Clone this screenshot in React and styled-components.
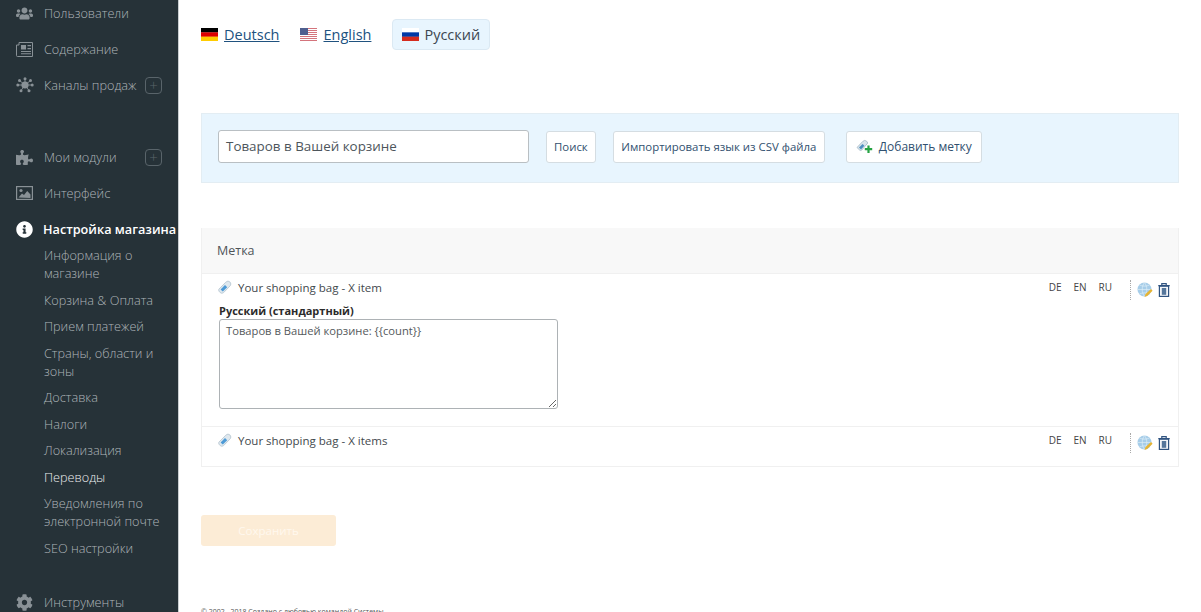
import React from "react";
import styled, { createGlobalStyle } from "styled-components";
import { FaUsers, FaPuzzlePiece, FaInfoCircle, FaCog } from "react-icons/fa";

const GlobalStyle = createGlobalStyle`
  html, body { margin: 0; padding: 0; height: 612px; overflow: hidden; background: #fff; }
  body { font-family: "Open Sans", "Liberation Sans", sans-serif; color: #333; }
  * { box-sizing: border-box; }
`;

const Page = styled.div`
  display: flex;
  height: 612px;
  overflow: hidden;
`;

// Sidebar
const Sidebar = styled.nav`
  flex: 0 0 178px;
  width: 178px;
  background: #263238;
  overflow: hidden;
  box-shadow: 1px 0 0 #c9ced1;
`;

const SideList = styled.div`
  margin-top: -5px;
`;

const SideRow = styled.div`
  display: flex;
  align-items: center;
  height: 36px;
  padding: 0 16px;
  color: ${(p) => (p.$active ? "#fff" : "#aeb5b9")};
  font-size: 12.7px;
  font-weight: ${(p) => (p.$active ? 600 : 300)};
  white-space: nowrap;
`;

const SideIcon = styled.span`
  flex: 0 0 ${(p) => (p.$active ? 27 : 28)}px;
  display: flex;
  align-items: center;
  color: ${(p) => (p.$active ? "#fff" : "#899196")};
  font-size: 17px;
`;

const PlusBox = styled.span`
  flex: 0 0 17px;
  height: 17px;
  margin-left: auto;
  border: 1px solid #59646a;
  border-radius: 4px;
  color: #59646a;
  font-size: 15px;
  font-weight: 300;
  line-height: 14px;
  text-align: center;
`;

const SideGap = styled.div`
  height: ${(p) => p.$h}px;
`;

const SubList = styled.div`
  margin-top: -1px;
`;

const SubItem = styled.div`
  padding: 0 10px 0 44px;
  margin-bottom: 8.5px;
  color: ${(p) => (p.$current ? "#eceeef" : "#aeb5b9")};
  font-size: 12.7px;
  font-weight: 300;
  line-height: 18px;
`;

// Main column
const Main = styled.main`
  flex: 1;
  min-width: 0;
  padding: 19px 22px 0 23px;
`;

const LangTabs = styled.div`
  display: flex;
  align-items: center;
  height: 31px;
`;

const LangTab = styled.a`
  display: flex;
  align-items: center;
  gap: ${(p) => (p.$active ? "5px" : "6px")};
  height: 31px;
  margin-right: ${(p) => (p.$active ? 0 : "21px")};
  padding: ${(p) => (p.$active ? "0 9px" : 0)};
  background: ${(p) => (p.$active ? "#e8f5fe" : "transparent")};
  border: ${(p) => (p.$active ? "1px solid #dbe9f3" : "none")};
  border-radius: 4px;
  color: ${(p) => (p.$active ? "#3c4650" : "#20527f")};
  font-size: 14.5px;
  text-decoration: ${(p) => (p.$active ? "none" : "underline")};
`;

const SearchPanel = styled.div`
  display: flex;
  align-items: center;
  height: 70px;
  margin-top: 63px;
  padding: 0 0 3px 16px;
  background: #e8f5fe;
  border: 1px solid #e3edf3;
`;

const SearchInput = styled.div`
  width: 311px;
  height: 33px;
  padding-left: 7px;
  background: #fff;
  border: 1px solid #b9bfc3;
  border-radius: 3px;
  color: #4d555b;
  font-size: 13.4px;
  line-height: 30px;
`;

const PanelButton = styled.div`
  display: flex;
  align-items: center;
  gap: 6px;
  height: 32px;
  margin-left: ${(p) => p.$ml}px;
  padding: 0 ${(p) => p.$px}px;
  background: #fff;
  border: 1px solid #d5dde2;
  border-radius: 3px;
  color: #31506f;
  font-size: ${(p) => p.$fs || 11.4}px;
  white-space: nowrap;
`;

const Table = styled.div`
  margin-top: 45px;
  border: 1px solid #f0f0f0;
  border-top: none;
`;

const TableHead = styled.div`
  display: flex;
  align-items: center;
  height: 45px;
  padding: 0 0 1px 15px;
  background: #f8f8f8;
  color: #4f5559;
  font-size: 12.5px;
`;

const Row = styled.div`
  min-height: ${(p) => p.$h}px;
  padding: 5px 8px 0 16px;
  border-top: 1px solid #f0f0f0;
`;

const RowTop = styled.div`
  display: flex;
  align-items: center;
  height: 16px;
  color: #43494d;
  font-size: 11.5px;
`;

const RowLabel = styled.span`
  margin-left: 6px;
`;

const RowLangs = styled.div`
  display: flex;
  align-items: center;
  gap: 12px;
  margin-left: auto;
  font-size: 10px;
  color: #444;
`;

const RowTools = styled.div`
  display: flex;
  align-items: center;
  gap: 5px;
  height: 20px;
  margin: 6px 0 0 6px;
  padding-left: 6px;
  border-left: 1px dotted #a9a9a9;
`;

const FieldLabel = styled.div`
  margin: 8px 0 0 1px;
  color: #2b2b2b;
  font-size: 11px;
  font-weight: 700;
  line-height: 16px;
`;

const TextArea = styled.textarea`
  display: block;
  width: 339px;
  height: 90px;
  margin: 0 0 0 1px;
  padding: 3px 6px;
  background: #fff;
  border: 1px solid #adb2b5;
  border-radius: 3px;
  color: #55595c;
  font-family: "Open Sans", "Liberation Sans", sans-serif;
  font-size: 11.2px;
  line-height: 15px;
`;

const SaveButton = styled.div`
  width: 135px;
  height: 31px;
  margin-top: 48px;
  background: #fcecd6;
  border-radius: 3px;
  color: #fff8ee;
  font-size: 11.5px;
  line-height: 31px;
  text-align: center;
`;

const Footer = styled.div`
  margin-top: 61px;
  color: #555;
  font-size: 7px;
  white-space: nowrap;
`;

const Flag = ({ stripes }) => (
  <svg width="17" height="13" viewBox="0 0 17 13">
    {stripes.map((c, i) => (
      <rect key={c} x="0" y={i * (13 / 3)} width="17" height={13 / 3 + 0.2} fill={c} />
    ))}
  </svg>
);

const UsFlag = () => (
  <svg width="17" height="13" viewBox="0 0 17 13">
    <rect width="17" height="13" fill="#fff" />
    {[0, 2, 4, 6, 8, 10, 12].map((y) => (
      <rect key={y} x="0" y={y} width="17" height="1" fill="#d4747c" />
    ))}
    <rect width="8" height="7" fill="#4f5f8f" />
  </svg>
);

const TagIcon = () => (
  <svg width="14" height="14" viewBox="0 0 14 14">
    <path d="M.8 9.2 7.8 2.2a3 3 0 0 1 4.4 0 3 3 0 0 1 0 3.6L5.6 12.6a2.6 2.6 0 0 1-3.4 0L.8 11z" fill="#dfe8ee" stroke="#b4c4cf" strokeWidth=".8" />
    <path d="M2.6 9.4 7 5l2.2 2.2L4.8 11.6z" fill="#4d9ad6" />
  </svg>
);

const AddTagIcon = () => (
  <svg width="17" height="15" viewBox="0 0 17 15">
    <path d="M1 8.5 6.8 2.4a2.8 2.8 0 0 1 4 0l1 1.6-6 7a1.6 1.6 0 0 1-2.2 0z" fill="#d8e4eb" stroke="#a3b8c6" strokeWidth=".8" />
    <path d="M3 8.5 6.6 5 8.4 6.8 5 10.4z" fill="#4d8fc0" />
    <path d="M12.5 6.5v7.5M8.8 10.2h7.4" stroke="#26a344" strokeWidth="2.2" />
  </svg>
);

const GlobeEditIcon = () => (
  <svg width="16" height="16" viewBox="0 0 16 16">
    <circle cx="7.5" cy="7.5" r="7" fill="#a6cde9" />
    <path d="M.5 7.5h14M7.5.5c-3 4-3 10 0 14M7.5.5c3 4 3 10 0 14M2.5 3c3 1.5 7 1.5 10 0M2.5 12c3-1.5 7-1.5 10 0" stroke="#e4f1f9" strokeWidth=".6" fill="none" />
    <path d="M7.5 15 8.5 12l5.5-5 1.6 1.8L10.2 14z" fill="#e6b432" />
  </svg>
);

const TrashIcon = () => (
  <svg width="12" height="14" viewBox="0 0 12 14">
    <path d="M.3 2.6h11.4M3.8 2.4V.7h4.4v1.7" stroke="#2f5380" strokeWidth="1.2" fill="none" />
    <rect x="1.4" y="3.2" width="9.2" height="10.2" fill="#f3f6f9" stroke="#2f5380" strokeWidth="1.2" />
    <rect x="3.8" y="5" width="4.4" height="6.8" fill="#55769b" />
  </svg>
);

const Channels = () => (
  <svg width="18" height="16" viewBox="0 0 18 16" fill="#899196" stroke="#899196">
    <circle cx="9" cy="8" r="3.6" stroke="none" />
    <path d="M9 8 3.5 3.5M9 8l5.5-4.5M9 8H1.5M9 8h7.5M9 8l-4 5.5M9 8l4 5.5M9 8V1.5" strokeWidth=".9" />
    {[[3.5, 3.5], [14.5, 3.5], [1.8, 8], [16.2, 8], [5, 13.8], [13, 13.8], [9, 1.8]].map(([x, y]) => (
      <circle key={x + "-" + y} cx={x} cy={y} r="1.5" stroke="none" />
    ))}
  </svg>
);

const NewsIcon = () => (
  <svg width="17" height="15" viewBox="0 0 17 15" fill="#899196">
    <path d="M3 .5h13.5v14H1.5A1 1 0 0 1 .5 13.5V3H3z" fill="none" stroke="#899196" />
    <rect x="5" y="3" width="5" height="4.5" />
    <path d="M11.5 3.6H15M11.5 6.6H15M5 9.5h10M5 11.8h10" stroke="#899196" strokeWidth="1.1" />
  </svg>
);

const PictureIcon = () => (
  <svg width="17" height="14" viewBox="0 0 17 14" fill="#899196">
    <rect x=".6" y=".6" width="15.8" height="12.8" fill="none" stroke="#899196" strokeWidth="1.2" />
    <circle cx="5" cy="4.5" r="1.6" />
    <path d="M2.5 11.5 6 7.5l2 1.5 3.2-4 3.3 3.6v3.4z" />
  </svg>
);

const subItems = [
  "Информация о магазине",
  "Корзина & Оплата",
  "Прием платежей",
  "Страны, области и зоны",
  "Доставка",
  "Налоги",
  "Локализация",
  "Переводы",
  "Уведомления по электронной почте",
  "SEO настройки",
];

function RowHeader({ label }) {
  return (
    <RowTop>
      <TagIcon />
      <RowLabel>{label}</RowLabel>
      <RowLangs>
        <span>DE</span>
        <span>EN</span>
        <span>RU</span>
        <RowTools>
          <GlobeEditIcon />
          <TrashIcon />
        </RowTools>
      </RowLangs>
    </RowTop>
  );
}

export default function App() {
  return (
    <Page>
      <GlobalStyle />
      <Sidebar>
        <SideList>
          <SideRow><SideIcon><FaUsers /></SideIcon>Пользователи</SideRow>
          <SideRow><SideIcon><NewsIcon /></SideIcon>Содержание</SideRow>
          <SideRow><SideIcon><Channels /></SideIcon>Каналы продаж<PlusBox>+</PlusBox></SideRow>
          <SideGap $h={36} />
          <SideRow><SideIcon><FaPuzzlePiece /></SideIcon>Мои модули<PlusBox>+</PlusBox></SideRow>
          <SideRow><SideIcon><PictureIcon /></SideIcon>Интерфейс</SideRow>
          <SideRow $active><SideIcon $active><FaInfoCircle /></SideIcon>Настройка магазина</SideRow>
          <SubList>
            {subItems.map((s) => (
              <SubItem key={s} $current={s === "Переводы"}>{s}</SubItem>
            ))}
          </SubList>
          <SideGap $h={19} />
          <SideRow><SideIcon><FaCog /></SideIcon>Инструменты</SideRow>
        </SideList>
      </Sidebar>
      <Main>
        <LangTabs>
          <LangTab><Flag stripes={["#000", "#d00", "#fc0"]} />Deutsch</LangTab>
          <LangTab><UsFlag />English</LangTab>
          <LangTab $active><Flag stripes={["#fff", "#0039a6", "#d52b1e"]} />Русский</LangTab>
        </LangTabs>
        <SearchPanel>
          <SearchInput>Товаров в Вашей корзине</SearchInput>
          <PanelButton $ml={17} $px={7}>Поиск</PanelButton>
          <PanelButton $ml={17} $px={7.5}>Импортировать язык из CSV файла</PanelButton>
          <PanelButton $ml={21} $px={9} $fs={12}><AddTagIcon />Добавить метку</PanelButton>
        </SearchPanel>
        <Table>
          <TableHead>Метка</TableHead>
          <Row $h={153}>
            <RowHeader label="Your shopping bag - X item" />
            <FieldLabel>Русский (стандартный)</FieldLabel>
            <TextArea readOnly value="Товаров в Вашей корзине: {{count}}" />
          </Row>
          <Row $h={40}>
            <RowHeader label="Your shopping bag - X items" />
          </Row>
        </Table>
        <SaveButton>Сохранить</SaveButton>
        <Footer>© 2002 - 2018 Создано с любовью командой Системы</Footer>
      </Main>
    </Page>
  );
}
